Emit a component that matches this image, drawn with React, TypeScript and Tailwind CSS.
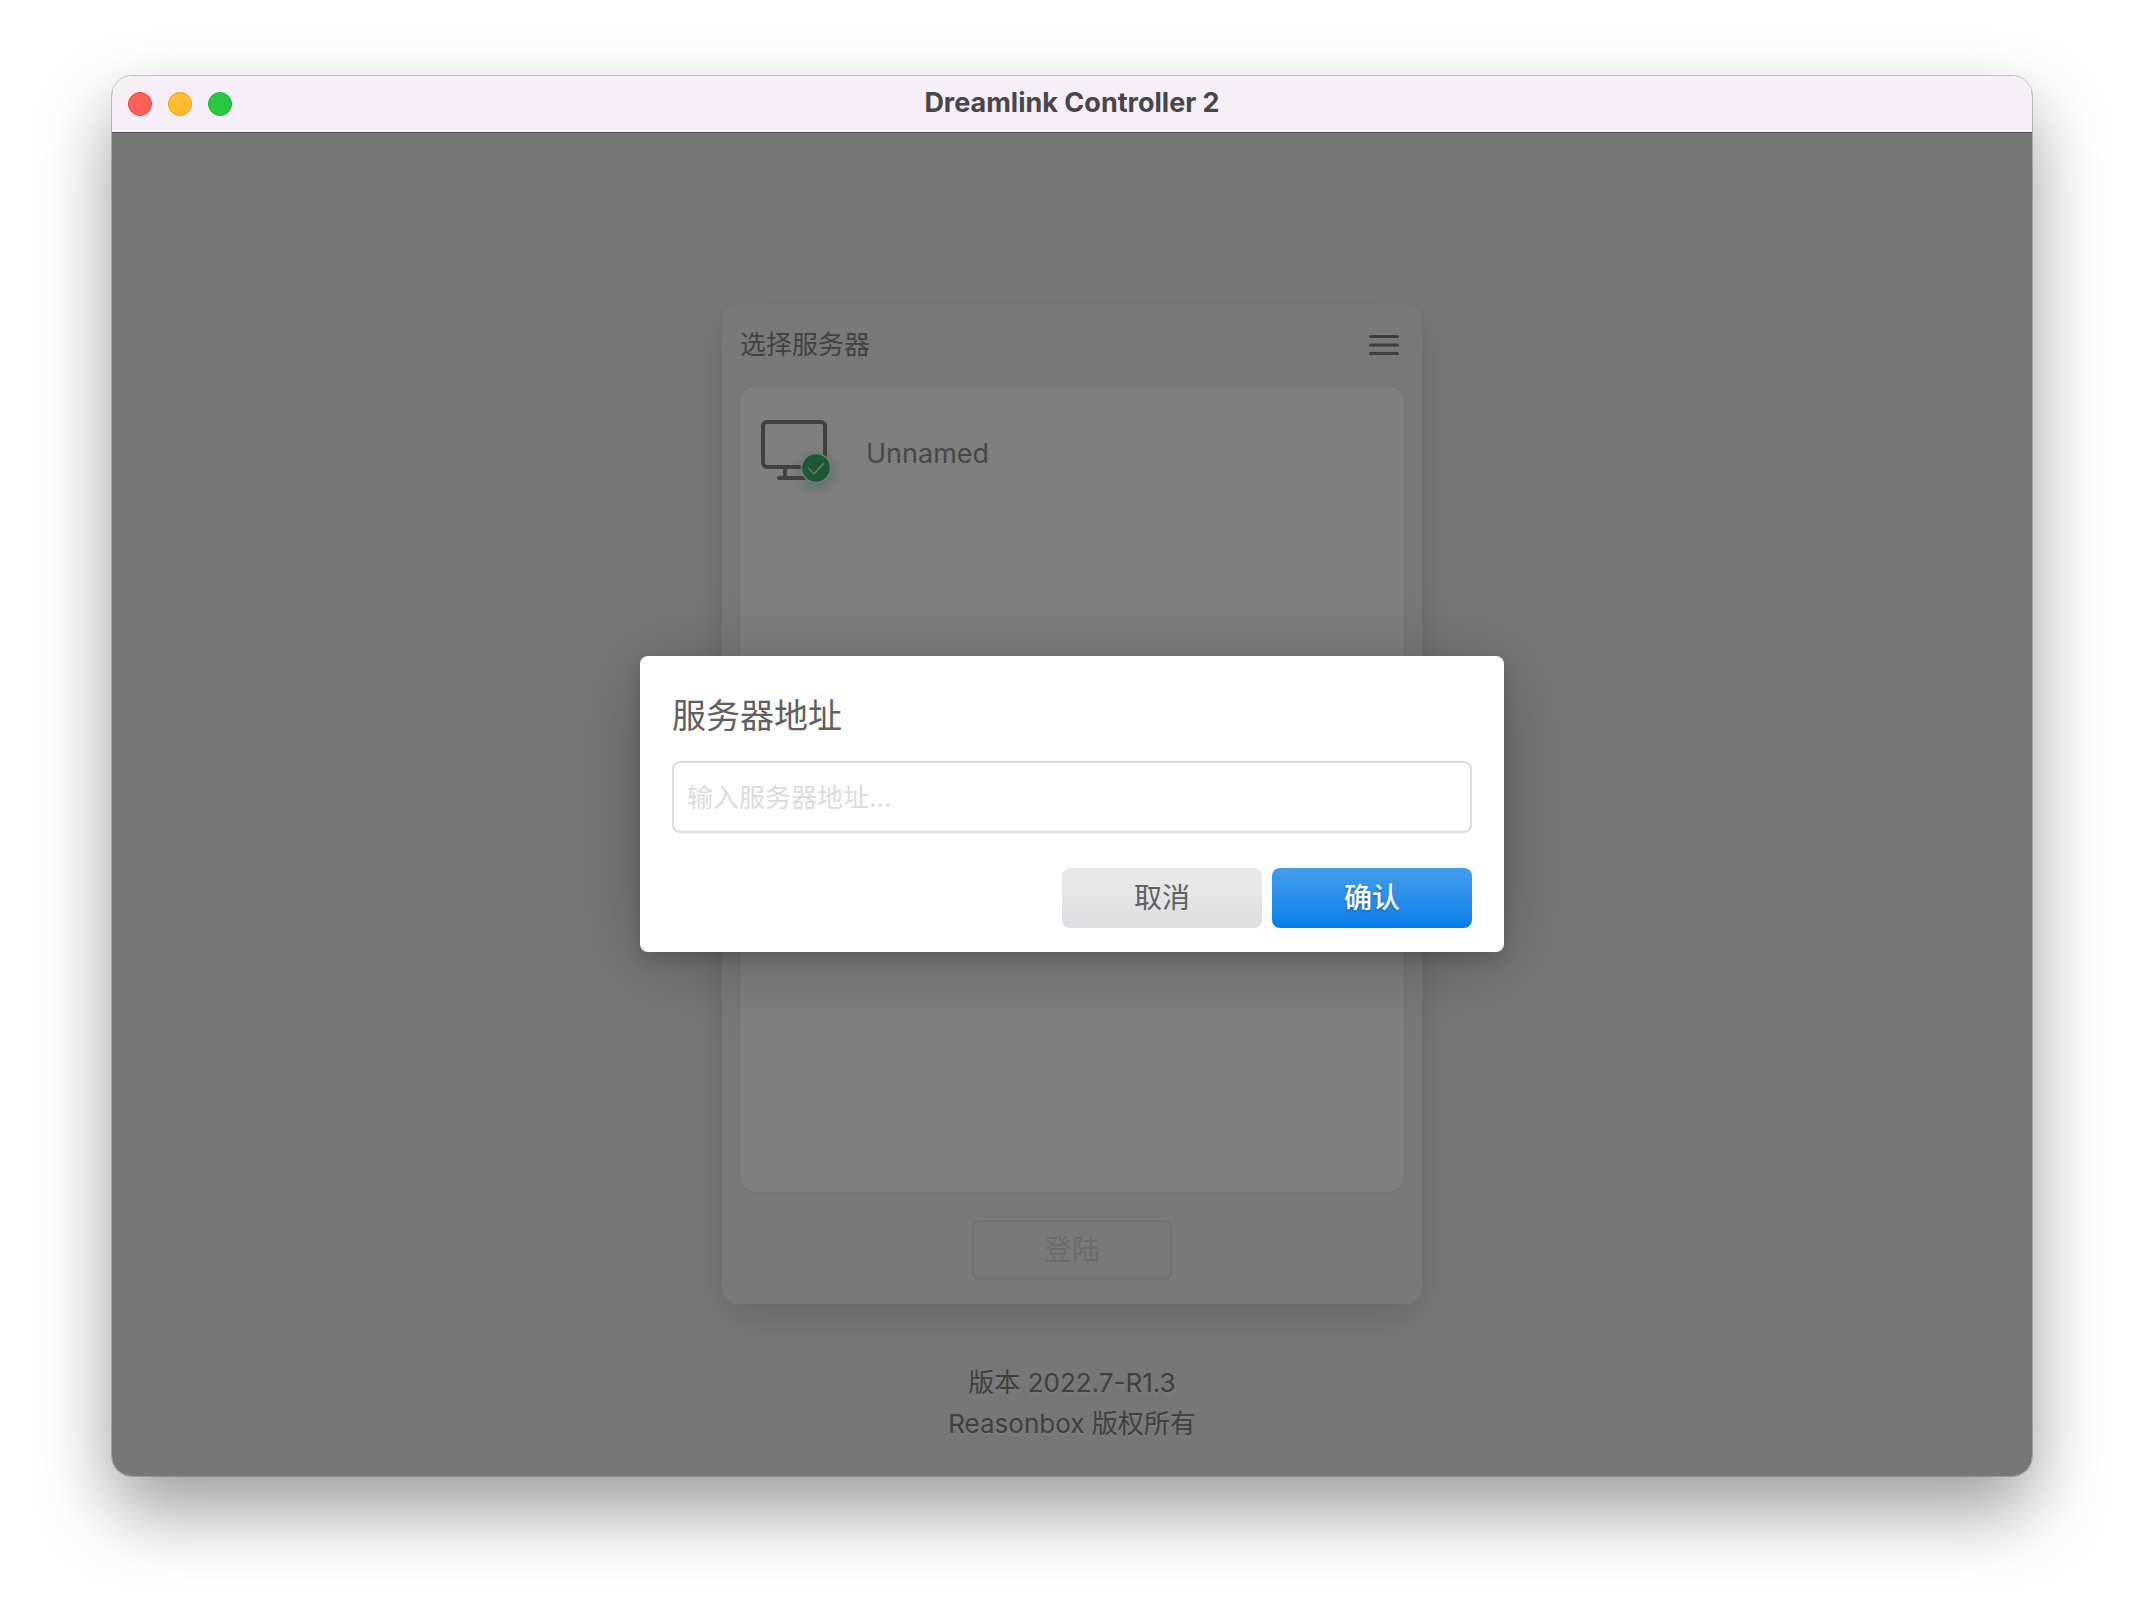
import { useState } from "react";

function TitleBar() {
  return (
    <header className="relative z-10 flex h-14 shrink-0 items-center justify-center bg-[#f6eff7] shadow-[0_1px_0_#4e4e4e]">
      <div className="absolute left-4 flex gap-4">
        <button aria-label="Close" className="h-6 w-6 rounded-full border border-[#e2463f] bg-[#ff5f57]" />
        <button aria-label="Minimize" className="h-6 w-6 rounded-full border border-[#e1a116] bg-[#febc2e]" />
        <button aria-label="Zoom" className="h-6 w-6 rounded-full border border-[#20b334] bg-[#28c840]" />
      </div>
      <h1 className="pb-0.5 text-[27px] leading-8 font-bold text-[#49454b]">Dreamlink Controller 2</h1>
    </header>
  );
}

function MonitorIcon() {
  return (
    <svg className="h-[88px] w-[88px]" viewBox="0 0 88 88" fill="none" aria-hidden="true">
      <defs>
        <filter id="glow" x="-100%" y="-100%" width="300%" height="300%">
          <feGaussianBlur stdDeviation="7" />
        </filter>
      </defs>
      <g stroke="#828282" strokeWidth="4" strokeLinecap="round">
        <rect x="11" y="12" width="62" height="45" rx="4" />
        <path d="M33 57v10M27 68h26" />
      </g>
      <circle cx="65" cy="62" r="16" fill="#24a35a" opacity="0.35" filter="url(#glow)" />
      <circle cx="64" cy="58" r="14.5" fill="#36b268" stroke="#f0f5f2" strokeWidth="1.5" />
      <path d="M56 58l6 6 10-11" stroke="#dcefe3" strokeWidth="1.5" />
    </svg>
  );
}

function ServerCard() {
  return (
    <section className="flex h-[1000px] w-[700px] max-w-full flex-col rounded-2xl bg-[#f3f3f3] px-[18px] pb-6 shadow-[0_14px_36px_rgba(0,0,0,0.12)]">
      <div className="flex h-[82px] items-center justify-between">
        <h2 className="text-[26px] leading-8 text-[#858585]">选择服务器</h2>
        <button aria-label="Menu" className="px-1">
          <svg className="h-8 w-8" viewBox="0 0 32 32" stroke="#7f7f7f" strokeWidth="3" strokeLinecap="round">
            <path d="M2.5 7.5h27M2.5 16h27M2.5 24.5h27" />
          </svg>
        </button>
      </div>
      <ul className="flex-1 rounded-2xl bg-white p-3 shadow-[0_0_3px_rgba(0,0,0,0.1)]">
        <li>
          <button className="flex w-full items-center gap-[26px] pt-3 text-[27px] leading-9 text-[#8f8f8f]">
            <MonitorIcon />
            <span>Unnamed</span>
          </button>
        </li>
      </ul>
      <button
        disabled
        className="mt-7 h-15 w-[200px] self-center rounded-lg border-2 border-[#e0e0e0] text-[28px] leading-9 text-[#d6d6d6]"
      >
        登陆
      </button>
    </section>
  );
}

function AddressDialog() {
  const [address, setAddress] = useState("");

  return (
    <div className="absolute inset-0 flex items-center justify-center bg-black/50">
      <form
        role="dialog"
        aria-modal="true"
        onSubmit={(e) => e.preventDefault()}
        className="flex w-[864px] max-w-full flex-col rounded-lg bg-white px-8 pt-10 pb-6 shadow-[0_8px_16px_rgba(0,0,0,0.14),0_10px_80px_rgba(0,0,0,0.22)]"
      >
        <label htmlFor="address" className="text-[34px] leading-10 text-[#606060]">
          服务器地址
        </label>
        <input
          id="address"
          type="text"
          value={address}
          onChange={(e) => setAddress(e.target.value)}
          placeholder="输入服务器地址..."
          className="mt-[25px] h-[72px] w-full rounded-lg border-2 border-[#dcdcdc] px-[13px] text-[26px] text-[#606060] outline-none placeholder:text-[#dcdcdc]"
        />
        <div className="mt-[35px] flex justify-end gap-[10px] text-[28px] leading-9">
          <button
            type="button"
            className="h-15 w-[200px] rounded-lg bg-linear-to-b from-[#e8e9e9] to-[#dedfe3] text-[#606060]"
          >
            取消
          </button>
          <button
            type="submit"
            className="h-15 w-[200px] rounded-lg bg-linear-to-b from-[#429eec] to-[#007fe9] font-medium text-white text-shadow-[0_2px_2px_rgba(0,0,0,0.25)]"
          >
            确认
          </button>
        </div>
      </form>
    </div>
  );
}

export default function App() {
  return (
    <div className="flex min-h-screen flex-col bg-white px-28 pt-19 pb-37 font-['Inter','Noto_Sans_CJK_SC',sans-serif]">
      <div className="flex flex-1 flex-col overflow-hidden rounded-[20px] shadow-[0_0_0_1px_rgba(0,0,0,0.2),0_34px_74px_rgba(0,0,0,0.4)]">
        <TitleBar />
        <main className="relative grid flex-1 grid-rows-[1fr_auto_1fr] justify-items-center bg-[#efefef]">
          <div />
          <ServerCard />
          <footer className="pt-[58px] text-center text-[26px] leading-[41px] text-[#7f7f7f] text-shadow-[0_2px_1px_rgba(255,255,255,0.8)]">
            <p>版本 2022.7-R1.3</p>
            <p>Reasonbox 版权所有</p>
          </footer>
          <AddressDialog />
        </main>
      </div>
    </div>
  );
}
